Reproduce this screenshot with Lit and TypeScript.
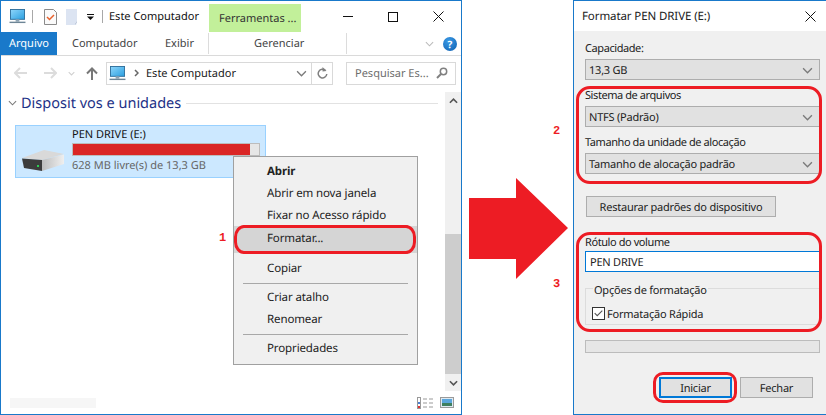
import { LitElement, html, css, svg } from "lit";
import { customElement } from "lit/decorators.js";

const pc = (w: number, h: number) => html`<svg width=${w} height=${h} viewBox="0 0 18 16">
  <defs><linearGradient id="scr" x1="0" y1="0" x2="1" y2="1"><stop offset="0" stop-color="#8fd6fb"/><stop offset="1" stop-color="#2a9fe0"/></linearGradient></defs>
  <rect x="1.500" y=".5" width="15" height="10.500" fill="url(#scr)" stroke="#2f6f9c"/>
  <rect x="7" y="11" width="4" height="2.500" fill="#8da3b3"/>
  <rect x=".5" y="13.500" width="17" height="1.500" fill="#6d8596"/>
</svg>`;

const chev = svg`<path d="M1 1l4 4 4-4" fill="none" stroke="#7a7a7a" stroke-width="1.200"/>`;
const chevron = html`<svg class="chev" width="11" height="7" viewBox="0 0 10 6">${chev}</svg>`;

@customElement("app-root")
export class AppRoot extends LitElement {
  static styles = css`
    :host { display: block; width: 826px; height: 415px; position: relative; overflow: hidden; background: #fff;
      font-family: "Noto Sans", sans-serif; font-size: 11px; color: #1a1a1a; text-rendering: geometricPrecision; }
    .page { display: flex; height: 415px; }
    svg { display: block; flex: none; }

    /* Explorer window */
    .win { width: 462px; height: 415px; box-sizing: border-box; border: 1px solid #1979ca; display: flex; flex-direction: column; flex: none; position: relative; }
    .title { height: 31px; display: flex; align-items: center; flex: none; }
    .qa { display: flex; align-items: center; padding-left: 8px; width: 208px; box-sizing: border-box; height: 31px; }
    .bar { width: 1px; height: 13px; background: #a8a8a8; }
    .green { width: 92px; height: 28px; margin-top: 3px; background: #c2f09a; color: #333; display: flex; align-items: center; padding-left: 10px; box-sizing: border-box; white-space: nowrap; }
    .ctrl { flex: 1; display: flex; justify-content: flex-end; align-items: center; padding-right: 17px; gap: 35px; }
    .tabs { height: 23px; display: flex; align-items: center; border-bottom: 1px solid #dadada; flex: none; }
    .tab-file { width: 56px; height: 23px; background: #1979ca; color: #fff; display: flex; align-items: center; justify-content: center; }
    .tab { color: #444; white-space: nowrap; }
    .t1 { margin-left: 15px; width: 93px; }
    .t2 { width: 43px; }
    .t3 { margin-left: 45px; width: 92px; }
    .sep-v { width: 1px; height: 21px; background: #dcdcdc; flex: none; }
    .tab-end { flex: 1; display: flex; align-items: center; justify-content: flex-end; gap: 9px; padding-right: 4px; }
    .help { width: 14px; height: 14px; border-radius: 50%; background: radial-gradient(circle at 40% 30%, #3a9ae6, #0e5fb0); color: #fff; font-size: 10px; font-weight: 700; display: flex; align-items: center; justify-content: center; }
    .nav { height: 36px; box-sizing: border-box; padding-bottom: 2px; display: flex; align-items: center; flex: none; }
    .navicons { width: 105px; display: flex; align-items: center; padding-left: 13px; box-sizing: border-box; gap: 14px; }
    .addr { width: 227px; height: 23px; box-sizing: border-box; border: 1px solid #d9d9d9; display: flex; align-items: center; }
    .addr .pcwrap { margin-left: 2px; }
    .addr .gt { margin-left: 8px; }
    .addr .txt { margin-left: 7px; color: #1a1a1a; white-space: nowrap; flex: 1; }
    .addr .chev { margin-right: 4px; }
    .refresh { width: 20px; height: 21px; border-left: 1px solid #d9d9d9; display: flex; align-items: center; justify-content: center; }
    .search { width: 110px; height: 23px; margin-left: 13px; box-sizing: border-box; border: 1px solid #d9d9d9; display: flex; align-items: center; justify-content: space-between; padding: 0 7px 0 8px; color: #6d6d6d; white-space: nowrap; }
    .main { flex: 1; display: flex; min-height: 0; }
    .content { flex: 1; min-width: 0; display: flex; flex-direction: column; padding: 0 0 0 5px; }
    .hd { display: flex; align-items: center; height: 22px; }
    .hd-t { font-size: 14.5px; color: #1e3287; margin-left: 4px; white-space: nowrap; }
    .hd-l { flex: 1; height: 1px; background: #e2e2e2; margin: 0 7px 0 5px; }
    .hd svg { margin-left: 2px; }
    .drive { width: 251px; height: 53px; box-sizing: border-box; margin: 11px 0 0 9px; background: #cce8ff; border: 1px solid #99d1ff; display: flex; }
    .dr-ic { width: 56px; display: flex; align-items: flex-end; padding: 0 0 5px 6px; box-sizing: border-box; }
    .dr-b { flex: 1; }
    .dr-n { height: 17px; line-height: 17px; color: #111; }
    .meter { width: 188px; height: 13px; box-sizing: border-box; border: 1px solid #bcbcbc; background: #e6e6e6; }
    .fill { height: 11px; background: #da2626; }
    .dr-f { height: 18px; line-height: 19px; color: #666; white-space: nowrap; }
    .status { height: 23px; display: flex; align-items: center; gap: 6px; padding: 0 7px 0 9px; flex: none; }
    .strip { width: 86px; height: 10px; background: #f6f6f6; margin-right: auto; }
    .scroll { width: 16px; background: #f0f0f0; display: flex; flex-direction: column; flex: none; }
    .sbtn { height: 17px; display: flex; align-items: center; justify-content: center; flex: none; }
    .strack { flex: 1; display: flex; flex-direction: column; justify-content: flex-end; }
    .thumb { height: 140px; background: #cdcdcd; }

    .menu { position: absolute; left: 233px; top: 156px; width: 185px; height: 209px; box-sizing: border-box; border: 1px solid #a0a0a0; background: #f0f0f0; padding-top: 4px; font-size: 11.5px; letter-spacing: -.12px; }
    .mi { height: 22px; line-height: 21px; padding-left: 33px; color: #222; white-space: nowrap; }
    .mi.b { font-weight: 700; }
    .mi.sel { height: 27px; line-height: 26px; background: #d5d5d5; }
    .msep { height: 1px; background: #a8a8a8; margin: 0 9px; }
    .msep.top { margin-top: -2px; }
    .mi.gap, .msep.gap { margin-top: 3px; }
    .mi.gap4 { margin-top: 4px; }

    /* middle */
    .mid { width: 111px; flex: none; padding: 178px 0 0 7px; box-sizing: border-box; }

    /* Dialog */
    .dlg { width: 253px; height: 415px; flex: none; box-sizing: border-box; border: solid #1979ca; border-width: 1px 0 1px 1px; display: flex; flex-direction: column; background: #f0f0f0; font-size: 11px; letter-spacing: -.22px; }
    .dt { height: 30px; background: #fff; display: flex; align-items: center; justify-content: space-between; padding: 0 10px 0 8px; flex: none; color: #222; font-size: 11.5px; letter-spacing: -.1px; }
    .db { padding: 0 6px 0 11px; display: flex; flex-direction: column; }
    .lab { height: 17px; line-height: 17px; color: #222; white-space: nowrap; margin-bottom: 2px; letter-spacing: -.42px; }
    .cap { margin-top: 9px; }
    .mt7 { margin-top: 7px; }
    .mt17 { margin-top: 17px; margin-bottom: 0; line-height: 18px; }
    .sel2 { height: 21px; box-sizing: border-box; border: 1px solid #adadad; background: #e1e1e1; display: flex; align-items: center; justify-content: space-between; padding: 1px 6px 0 3px; color: #222; white-space: nowrap; }
    .btn { box-sizing: border-box; border: 1px solid #adadad; background: #e1e1e1; display: flex; align-items: center; justify-content: center; color: #222; white-space: nowrap; padding-top: 1px; }
    .restore { width: 190px; height: 21px; margin: 22px 0 0 1px; }
    .input { height: 21px; box-sizing: border-box; border: 1px solid #0078d7; background: #fff; display: flex; align-items: center; padding: 1px 0 0 4px; color: #222; }
    .group { height: 37px; box-sizing: border-box; border: 1px solid #dcdcdc; position: relative; margin-top: 16px; display: flex; align-items: flex-end; padding: 0 0 3px 6px; }
    .legend { position: absolute; left: 7px; top: -7px; background: #f0f0f0; padding: 0 1px; height: 17px; line-height: 17px; color: #222; white-space: nowrap; }
    .chk { display: flex; align-items: center; gap: 2px; color: #222; line-height: 15px; padding-top: 1px; }
    .chk span { position: relative; top: 1px; }
    .box { width: 13px; height: 13px; box-sizing: border-box; border: 1px solid #333; background: #fff; }
    .prog { height: 13px; box-sizing: border-box; border: 1px solid #bcbcbc; background: #e6e6e6; margin-top: 15px; }
    .acts { display: flex; margin: 24px 0 0 74px; gap: 8px; align-items: center; }
    .ini { width: 73px; height: 21px; border: 2px solid #0078d7; }
    .fec { width: 73px; height: 21px; }

    /* annotations */
    .ring { position: absolute; box-sizing: border-box; border: 3px solid #ed1c24; }
    .r1 { left: 234px; top: 225px; width: 182px; height: 29px; border-radius: 10px / 12px; }
    .r2 { left: 576px; top: 86px; width: 246px; height: 98px; border-radius: 14px; }
    .r3 { left: 576px; top: 232px; width: 246px; height: 100px; border-radius: 14px; }
    .r4 { left: 653px; top: 372px; width: 84px; height: 31px; border-radius: 10px; }
    .num { position: absolute; color: #ed1c24; font: 700 12px/14px "Liberation Mono", monospace; }
    .n1 { left: 219px; top: 231px; }
    .n2 { left: 553px; top: 124px; }
    .n3 { left: 553px; top: 277px; }
  `;

  render() {
    return html`
    <div class="page">
      <div class="win">
        <div class="title">
          <div class="qa">
            ${pc(17, 15)}
            <div class="bar" style="margin-left:6px"></div>
            <svg style="margin-left:11px" width="13" height="16" viewBox="0 0 13 16"><path d="M.5.5h9l3 3v12H.5z" fill="#fafafa" stroke="#8a8a8a"/><path d="M3 8l2.500 2.500L10 6" fill="none" stroke="#e8612c" stroke-width="1.500"/></svg>
            <svg style="margin-left:9px" width="13" height="16" viewBox="0 0 13 16"><path d="M0 0h11v14l-1 2H0z" fill="#dce4f2"/><path d="M11 12v2h-2v2z" fill="#b9c2d2"/></svg>
            <svg style="margin-left:8px" width="7" height="6" viewBox="0 0 7 6"><rect width="7" height="1" fill="#111"/><path d="M0 2.500h7L3.500 6z" fill="#111"/></svg>
            <div class="bar" style="margin-left:8px"></div>
            <span style="margin-left:6px;white-space:nowrap;color:#111">Este Computador</span>
          </div>
          <div class="green">Ferramentas ...</div>
          <div class="ctrl">
            <svg width="10" height="10" viewBox="0 0 10 10"><rect y="4" width="10" height="1" fill="#111"/></svg>
            <svg width="10" height="10" viewBox="0 0 10 10"><rect x=".5" y=".5" width="9" height="9" fill="none" stroke="#111"/></svg>
            <svg width="11" height="11" viewBox="0 0 11 11"><path d="M.5.5l10 10M10.500.5l-10 10" stroke="#111" fill="none"/></svg>
          </div>
        </div>
        <div class="tabs">
          <div class="tab-file">Arquivo</div>
          <div class="tab t1">Computador</div>
          <div class="tab t2">Exibir</div>
          <div class="sep-v"></div>
          <div class="tab t3">Gerenciar</div>
          <div class="sep-v"></div>
          <div class="tab-end">
            <svg width="9" height="6" viewBox="0 0 10 6"><path d="M1 1l4 4 4-4" fill="none" stroke="#bbb" stroke-width="1.200"/></svg>
            <div class="help">?</div>
          </div>
        </div>
        <div class="nav">
          <div class="navicons">
            <svg width="13" height="12" viewBox="0 0 13 12"><path d="M6 1L1 6l5 5M1 6h12" fill="none" stroke="#dcdcdc" stroke-width="2"/></svg>
            <svg style="margin-left:3px" width="13" height="12" viewBox="0 0 13 12"><path d="M7 1l5 5-5 5M12 6H0" fill="none" stroke="#dcdcdc" stroke-width="2"/></svg>
            <svg style="margin-left:-3px" width="7" height="5" viewBox="0 0 10 6"><path d="M1 1l4 4 4-4" fill="none" stroke="#d0d0d0" stroke-width="1.500"/></svg>
            <svg style="margin-left:-3px" width="12" height="13" viewBox="0 0 12 13"><path d="M1 6.500L6 1.500l5 5M6 1.500V13" fill="none" stroke="#777" stroke-width="2"/></svg>
          </div>
          <div class="addr">
            <div class="pcwrap">${pc(17, 15)}</div>
            <svg class="gt" width="5" height="8" viewBox="0 0 5 8"><path d="M1 1l3 3-3 3" fill="none" stroke="#666" stroke-width="1.500"/></svg>
            <span class="txt">Este Computador</span>
            ${chevron}
            <div class="refresh"><svg width="11" height="12" viewBox="0 0 11 12"><path d="M8.500 3.500A4.300 4.300 0 1 0 9.800 7" fill="none" stroke="#808080" stroke-width="1.500"/><path d="M5.500 0v4.500l4-.5z" fill="#808080"/></svg></div>
          </div>
          <div class="search">Pesquisar Es...
            <svg width="12" height="12" viewBox="0 0 12 12"><circle cx="7.500" cy="4.500" r="3.200" fill="none" stroke="#808080" stroke-width="1.500"/><path d="M5 7l-4 4" stroke="#808080" stroke-width="2"/></svg>
          </div>
        </div>
        <div class="main">
          <div class="content">
            <div class="hd">
              <svg width="9" height="6" viewBox="0 0 10 6">${chev}</svg>
              <span class="hd-t">Disposit vos e unidades</span>
              <div class="hd-l"></div>
            </div>
            <div class="drive">
              <div class="dr-ic">
                <svg width="43" height="22" viewBox="0 0 43 22">
                  <defs><linearGradient id="dt" x1="0" y1="0" x2="1" y2="0"><stop offset="0" stop-color="#bdbdbd"/><stop offset="1" stop-color="#efefef"/></linearGradient></defs>
                  <path d="M0 8L22 0l20 4-22 6z" fill="#d9d9d9"/>
                  <path d="M20 10l22-5.500V14L20 21z" fill="url(#dt)"/>
                  <path d="M0 8.500L20 10v11L2 18z" fill="#3c3c3c"/>
                  <rect x="15" y="15" width="2" height="2" fill="#2ecc52"/>
                </svg>
              </div>
              <div class="dr-b">
                <div class="dr-n">PEN DRIVE (E:)</div>
                <div class="meter"><div class="fill" style="width:177px"></div></div>
                <div class="dr-f">628 MB livre(s) de 13,3 GB</div>
              </div>
            </div>
          </div>
          <div class="scroll">
            <div class="sbtn"><svg width="9" height="6" viewBox="0 0 10 6"><path d="M1 5l4-4 4 4" fill="none" stroke="#555" stroke-width="1.800"/></svg></div>
            <div class="strack"><div class="thumb"></div></div>
            <div class="sbtn"><svg width="9" height="6" viewBox="0 0 10 6"><path d="M1 1l4 4 4-4" fill="none" stroke="#555" stroke-width="1.800"/></svg></div>
          </div>
        </div>
        <div class="status">
          <div class="strip"></div>
          <svg width="16" height="12" viewBox="0 0 16 12"><rect x=".5" y=".5" width="3" height="11" fill="#fff" stroke="#999"/><rect x="1" y="9" width="2" height="2" fill="#d33"/><rect x="1" y="5" width="2" height="2" fill="#4a7fd0"/><path d="M6 2h4M12 2h4M6 6h4M12 6h4M6 10h4M12 10h4" stroke="#999"/></svg>
          <svg width="14" height="11" viewBox="0 0 14 11" style="margin-left:1px"><rect x=".5" y=".5" width="13" height="10" fill="#dfeaf2" stroke="#9a9a9a"/><rect x="2" y="2" width="10" height="4" fill="#5aa6dc"/><rect x="2" y="6" width="10" height="3" fill="#3f7f5f"/></svg>
        </div>
      </div>

      <div class="mid">
        <svg width="99" height="101" viewBox="0 0 99 101"><path d="M0 20h47V0l52 50-52 51V81H0z" fill="#ed1c24"/></svg>
      </div>

      <div class="dlg">
        <div class="dt"><span>Formatar PEN DRIVE (E:)</span>
          <svg width="11" height="11" viewBox="0 0 11 11"><path d="M.5.5l10 10M10.500.5l-10 10" stroke="#111" fill="none"/></svg>
        </div>
        <div class="db">
          <div class="lab cap">Capacidade:</div>
          <div class="sel2"><span>13,3 GB</span>${chevron}</div>
          <div class="lab mt7">Sistema de arquivos</div>
          <div class="sel2"><span>NTFS (Padrão)</span>${chevron}</div>
          <div class="lab mt7">Tamanho da unidade de alocação</div>
          <div class="sel2"><span>Tamanho de alocação padrão</span>${chevron}</div>
          <div class="btn restore">Restaurar padrões do dispositivo</div>
          <div class="lab mt17">Rótulo do volume</div>
          <div class="input">PEN DRIVE</div>
          <div class="group">
            <div class="legend">Opções de formatação</div>
            <label class="chk"><svg class="box" width="13" height="13" viewBox="0 0 13 13"><path d="M2 6l3 3 6-6" fill="none" stroke="#555" stroke-width="1.300"/></svg><span>Formatação Rápida</span></label>
          </div>
          <div class="prog"></div>
          <div class="acts"><div class="btn ini">Iniciar</div><div class="btn fec">Fechar</div></div>
        </div>
      </div>
    </div>

    <div class="menu">
      <div class="mi b">Abrir</div>
      <div class="mi">Abrir em nova janela</div>
      <div class="mi">Fixar no Acesso rápido</div>
      <div class="msep top"></div>
      <div class="mi sel">Formatar...</div>
      <div class="msep"></div>
      <div class="mi gap4">Copiar</div>
      <div class="msep gap"></div>
      <div class="mi gap">Criar atalho</div>
      <div class="mi">Renomear</div>
      <div class="msep gap"></div>
      <div class="mi gap">Propriedades</div>
    </div>

    <div class="ring r1"></div><div class="ring r2"></div><div class="ring r3"></div><div class="ring r4"></div>
    <div class="num n1">1</div><div class="num n2">2</div><div class="num n3">3</div>
    `;
  }
}
